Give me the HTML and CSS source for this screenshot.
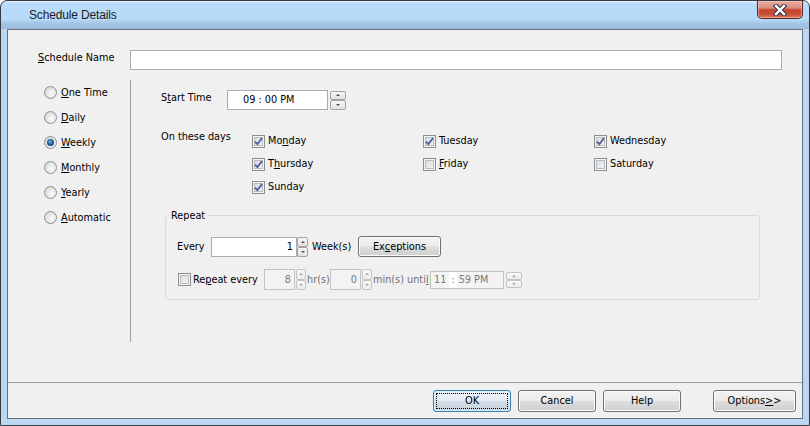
FILE: index.html
```html
<!DOCTYPE html>
<html>
<head>
<meta charset="utf-8">
<title>Schedule Details</title>
<link rel="stylesheet" href="styles.css">
</head>
<body>
<div class="window">
  <div class="titlebar">
    <span class="title">Schedule Details</span>
    <div class="close-btn">
      <svg width="16" height="12" viewBox="0 0 16 12">
        <path d="M4 2 L12 10 M12 2 L4 10" stroke="#3b3d55" stroke-width="4.6" stroke-linecap="square" fill="none"/>
        <path d="M4 2 L12 10 M12 2 L4 10" stroke="#ffffff" stroke-width="2.4" stroke-linecap="square" fill="none"/>
      </svg>
    </div>
  </div>
  <div class="client">
    <div class="top">
      <div class="name-row">
        <span class="name-label"><u>S</u>chedule Name</span>
        <div class="field name-field"></div>
      </div>
      <div class="main">
        <div class="radios">
          <div class="radio-row"><span class="radio"></span><span><u>O</u>ne Time</span></div>
          <div class="radio-row"><span class="radio"></span><span><u>D</u>aily</span></div>
          <div class="radio-row"><span class="radio on"></span><span><u>W</u>eekly</span></div>
          <div class="radio-row"><span class="radio"></span><span><u>M</u>onthly</span></div>
          <div class="radio-row"><span class="radio"></span><span><u>Y</u>early</span></div>
          <div class="radio-row"><span class="radio"></span><span><u>A</u>utomatic</span></div>
        </div>
        <div class="vsep"></div>
        <div class="pane">
          <div class="time-row">
            <span class="lbl-start">S<u>t</u>art Time</span>
            <div class="field time-field">09 : 00 PM</div>
            <div class="spin spin-lg"><span class="up"></span><span class="down"></span></div>
          </div>
          <div class="days">
            <span class="days-label">On these days</span>
            <div class="days-grid">
              <div class="check-item"><span class="check"><svg width="9" height="9" viewBox="0 0 9 9"><path d="M1 4.6 L3.4 7.2 L8 1" stroke="#4a5b9c" stroke-width="1.8" fill="none"/></svg></span><span>Mo<u>n</u>day</span></div>
              <div class="check-item"><span class="check"><svg width="9" height="9" viewBox="0 0 9 9"><path d="M1 4.6 L3.4 7.2 L8 1" stroke="#4a5b9c" stroke-width="1.8" fill="none"/></svg></span><span>Tuesday</span></div>
              <div class="check-item"><span class="check"><svg width="9" height="9" viewBox="0 0 9 9"><path d="M1 4.6 L3.4 7.2 L8 1" stroke="#4a5b9c" stroke-width="1.8" fill="none"/></svg></span><span>Wednesday</span></div>
              <div class="check-item"><span class="check"><svg width="9" height="9" viewBox="0 0 9 9"><path d="M1 4.6 L3.4 7.2 L8 1" stroke="#4a5b9c" stroke-width="1.8" fill="none"/></svg></span><span>T<u>h</u>ursday</span></div>
              <div class="check-item"><span class="check"></span><span><u>F</u>riday</span></div>
              <div class="check-item"><span class="check"></span><span>Saturday</span></div>
              <div class="check-item"><span class="check"><svg width="9" height="9" viewBox="0 0 9 9"><path d="M1 4.6 L3.4 7.2 L8 1" stroke="#4a5b9c" stroke-width="1.8" fill="none"/></svg></span><span>Sunday</span></div>
            </div>
          </div>
          <div class="group">
            <span class="legend">Repeat</span>
            <div class="every-row">
              <span class="every-label">Every</span>
              <div class="field every-field">1</div>
              <div class="spin spin-sm"><span class="up"></span><span class="down"></span></div>
              <span class="weeks">Week(s)</span>
              <div class="btn exc-btn">Ex<u>c</u>eptions</div>
            </div>
            <div class="repeat-row">
              <span class="check rep-check"></span>
              <span class="rep-label">Re<u>p</u>eat every</span>
              <div class="field dis num-field">8</div>
              <div class="spin dis spin-xs"><span class="up"></span><span class="down"></span></div>
              <span class="dis-text hr-label">hr(s)</span>
              <div class="field dis num-field">0</div>
              <div class="spin dis spin-xs"><span class="up"></span><span class="down"></span></div>
              <span class="dis-text until-label">min(s) unti<u>l</u></span>
              <div class="field dis until-field"><span>11</span><span class="colon">:</span><span>59 PM</span></div>
              <div class="spin dis spin-until"><span class="up"></span><span class="down"></span></div>
            </div>
          </div>
        </div>
      </div>
    </div>
    <div class="footer">
      <div class="btn ok-btn">OK</div>
      <div class="btn std-btn">Cancel</div>
      <div class="btn std-btn">Help</div>
      <div class="btn opt-btn">Options<u>&gt;</u>&gt;</div>
    </div>
  </div>
</div>
</body>
</html>
```

FILE: styles.css
```css
* { box-sizing: border-box; }
html, body { margin: 0; padding: 0; }
body {
  width: 810px;
  height: 426px;
  overflow: hidden;
  background: #ffffff;
  font-family: "DejaVu Sans Condensed", "DejaVu Sans", sans-serif;
  font-stretch: condensed;
  font-size: 10.8px;
  line-height: 14px;
  color: #000;
}
u { text-decoration: underline; text-underline-offset: 1px; text-decoration-thickness: 1px; }

.window {
  width: 810px;
  height: 426px;
  display: flex;
  flex-direction: column;
  border: 1px solid #363b42;
  border-radius: 7px 7px 0 0;
  padding: 0 6px 6px 6px;
  background: linear-gradient(#e9f4fe 0, #b9dbfa 2px, #b9dbfa 18px, #a6c7e6 22px, #9cbbd9 28px, #bcd7f2 28px, #bcd7f2 100%);
}

.titlebar {
  height: 28px;
  display: flex;
  justify-content: space-between;
  align-items: flex-start;
  padding-left: 22px;
  flex-shrink: 0;
}
.title {
  font-family: "Liberation Sans", Arial, sans-serif;
  font-stretch: normal;
  font-size: 12px;
  letter-spacing: -0.15px;
  line-height: 28px;
  color: #1b1b1b;
}
.close-btn {
  width: 46px;
  height: 19px;
  margin-top: -1px;
  border: 1px solid #4e2521;
  border-top-color: #363b42;
  border-radius: 0 0 5px 5px;
  background: linear-gradient(#e8ada0 0, #dd8f80 40%, #c8472f 52%, #c84a31 75%, #d9775e 100%);
  box-shadow: inset 0 0 0 1px rgba(255,210,200,0.55);
  display: flex;
  align-items: center;
  justify-content: center;
}

.client {
  flex: 1;
  display: flex;
  flex-direction: column;
  border: 1px solid #66717f;
  background: #f0f0f0;
}
.top {
  flex: 1;
  padding-top: 20px;
}
.name-row {
  display: flex;
  align-items: center;
  height: 20px;
  padding-right: 20px;
}
.name-label { width: 122px; padding-left: 30px; padding-bottom: 5px; }
.field {
  background: #fff;
  border: 1px solid #a9abae;
}
.name-field { flex: 1; height: 20px; }

.main {
  display: flex;
  margin-top: 10px;
  height: 262px;
}
.radios { width: 122px; padding-left: 36px; }
.radio-row {
  height: 25px;
  display: flex;
  align-items: center;
  gap: 4px;
}
.radio {
  width: 13px;
  height: 13px;
  border-radius: 50%;
  border: 1px solid #8e8f8f;
  background: radial-gradient(circle at 60% 60%, #fafafa 0, #e9e9e9 45%, #c9c9c9 100%);
  display: grid;
  place-items: center;
  flex-shrink: 0;
}
.radio.on::after {
  content: "";
  width: 7px;
  height: 7px;
  border-radius: 50%;
  background: radial-gradient(circle at 45% 40%, #7fbcea 0, #2a6fae 35%, #0c3560 75%, #0a2748 100%);
}
.vsep { width: 1px; background: #a0a0a0; }

.pane { flex: 1; padding-left: 30px; padding-top: 10px; }
.time-row { display: flex; align-items: center; height: 20px; }
.lbl-start { width: 66px; padding-bottom: 4px; }
.time-field {
  width: 101px;
  height: 20px;
  padding-left: 15px;
  display: flex;
  align-items: center;
}
.spin { display: flex; flex-direction: column; flex-shrink: 0; }
.spin span {
  flex: 1;
  border: 1px solid #a3a3a3;
  border-radius: 2px;
  background: linear-gradient(#f6f6f6, #e1e1e1);
  display: grid;
  place-items: center;
}
.spin .up::after {
  content: "";
  border-left: 2px solid transparent;
  border-right: 2px solid transparent;
  border-bottom: 2px solid #4c4c4c;
}
.spin .down::after {
  content: "";
  border-left: 2px solid transparent;
  border-right: 2px solid transparent;
  border-top: 2px solid #4c4c4c;
}
.spin.dis span { border-color: #c4c4c4; background: linear-gradient(#f8f8f8, #ececec); }
.spin.dis .up::after { border-bottom-color: #a8a8a8; }
.spin.dis .down::after { border-top-color: #a8a8a8; }
.spin-lg { margin-left: 2px; width: 16px; height: 19px; }

.days { display: flex; margin-top: 20px; }
.days-label { width: 91px; flex-shrink: 0; }
.days-grid {
  display: grid;
  grid-template-columns: 171px 171px auto;
  grid-auto-rows: 23px;
}
.check-item { display: flex; align-items: center; gap: 3px; }
.check-item > span:last-child { padding-bottom: 1px; }
.check {
  width: 13px;
  height: 13px;
  border: 1px solid #8e8f8f;
  background: linear-gradient(135deg, #d6dadf, #f7f7f7);
  box-shadow: inset 0 0 0 1px #f4f4f4, inset 0 0 0 2px #b9bdc2;
  display: grid;
  place-items: center;
  flex-shrink: 0;
}
.check svg { display: block; }

.group {
  position: relative;
  margin: 16px 0 0 4px;
  width: 595px;
  height: 85px;
  border: 1px solid #d5dbe0;
  border-radius: 3px;
  padding: 20px 0 0 11px;
}
.legend {
  position: absolute;
  top: -7px;
  left: 3px;
  padding: 0 2px;
  background: #f0f0f0;
}
.every-row { display: flex; align-items: center; height: 21px; }
.every-label { width: 34px; }
.every-field {
  width: 86px;
  height: 20px;
  text-align: right;
  padding-right: 3px;
  line-height: 18px;
}
.spin-sm { width: 11px; height: 20px; }
.weeks { margin-left: 4px; width: 46px; white-space: nowrap; }

.btn {
  position: relative;
  height: 22px;
  border: 1px solid #707070;
  border-radius: 3px;
  background: linear-gradient(#f2f2f2 0%, #ebebeb 48%, #dddddd 52%, #cfcfcf 100%);
  box-shadow: inset 0 0 0 1px #fbfbfb;
  display: flex;
  align-items: center;
  justify-content: center;
  flex-shrink: 0;
}
.exc-btn { width: 83px; height: 21px; }

.repeat-row { display: flex; align-items: center; height: 21px; margin-top: 12px; white-space: nowrap; }
.rep-check { margin-left: 1px; }
.rep-label { margin-left: 2px; width: 71px; }
.field.dis {
  background: #f3f3f3;
  border-color: #c2c2c2;
  color: #7a7a7a;
}
.num-field {
  width: 31px;
  height: 21px;
  text-align: right;
  padding-right: 3px;
  line-height: 19px;
}
.spin-xs { margin-left: 1px; width: 10px; height: 21px; }
.dis-text { color: #707070; }
.hr-label { margin-left: 1px; width: 23px; }
.until-label { margin-left: 1px; width: 57px; }
.until-field {
  width: 74px;
  height: 18px;
  display: flex;
  align-items: center;
  padding-left: 3px;
}
.until-field .colon {
  background: #fff;
  height: 16px;
  padding: 0 2px;
  margin: 0 2px 0 3px;
  display: flex;
  align-items: center;
}
.spin-until { margin-left: 2px; width: 16px; height: 16px; }

.footer {
  height: 36px;
  flex-shrink: 0;
  border-top: 1px solid #a0a0a0;
  display: flex;
  justify-content: flex-end;
  align-items: flex-start;
  padding: 7px 6px 0 0;
  gap: 7px;
}
.std-btn { width: 78px; }
.ok-btn {
  width: 78px;
  border-color: #3c7fb1;
  background: linear-gradient(#eef3f8 0%, #e3eaf1 48%, #d3dce5 52%, #c8d3de 100%);
  box-shadow: inset 0 0 0 1px #d8eefb;
}
.ok-btn::after {
  content: "";
  position: absolute;
  inset: 2px;
  border: 1px dotted #000;
}
.opt-btn { width: 83px; margin-left: 25px; }
```
